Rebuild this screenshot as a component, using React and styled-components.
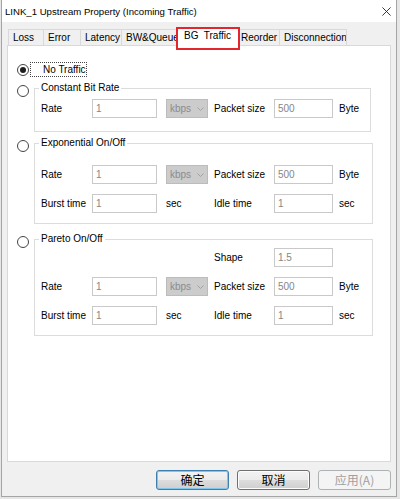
import React from 'react';
import styled, { createGlobalStyle } from 'styled-components';

const TABS = [
    { label: 'Loss', w: 36 },
    { label: 'Error', w: 37 },
    { label: 'Latency', w: 41 },
    { label: 'BW&Queue', w: 56 },
    { label: 'BG  Traffic', w: 59, active: true },
    { label: 'Reorder', w: 43 },
    { label: 'Disconnection', w: 67 },
];

const RATE_ROW = ['Rate', '1', 'kbps', 'Packet size', '500', 'Byte'];
const BURST_ROW = ['Burst time', '1', 'sec', 'Idle time', '1', 'sec'];

const GROUPS = [
    { title: 'Constant Bit Rate', w: 337, pt: 4, pb: 13, mt: 4, rows: [RATE_ROW] },
    { title: 'Exponential On/Off', w: 339, pt: 15, pb: 10, mt: 4, rows: [RATE_ROW, BURST_ROW] },
    {
        title: 'Pareto On/Off', w: 339, pt: 2, pb: 10, mt: 8,
        rows: [[null, null, null, 'Shape', '1.5', null], RATE_ROW, BURST_ROW],
    },
];

const App = () => {
    return (
        <>
            <GlobalStyle />
            <Window>
                <TitleBar>
                    <span>LINK_1 Upstream Property (Incoming Traffic)</span>
                    <CloseIcon viewBox="0 0 10 10">
                        <path d="M0.5 0.5 L9.5 9.5 M9.5 0.5 L0.5 9.5" />
                    </CloseIcon>
                </TitleBar>

                <Body>
                    <TabStrip>
                        {TABS.map((tab) => (
                            <Tab key={tab.label} $w={tab.w} $active={tab.active}>
                                {tab.label}
                                {tab.active && <Highlight />}
                            </Tab>
                        ))}
                    </TabStrip>

                    <Panel>
                        <OptionRow $center>
                            <Radio $checked />
                            <FocusLabel>No Traffic</FocusLabel>
                        </OptionRow>

                        {GROUPS.map((group) => (
                            <OptionRow key={group.title} $mt={group.mt}>
                                <Radio $top={4} />
                                <GroupBox $w={group.w} $pt={group.pt} $pb={group.pb}>
                                    <Legend>{group.title}</Legend>
                                    <FieldGrid>
                                        {group.rows.map((row, r) =>
                                            row.map((cell, c) => (
                                                <Cell key={`${r}-${c}`} cell={cell} col={c} />
                                            ))
                                        )}
                                    </FieldGrid>
                                </GroupBox>
                            </OptionRow>
                        ))}
                    </Panel>

                    <ButtonBar>
                        <DialogButton $focused>确定</DialogButton>
                        <DialogButton>取消</DialogButton>
                        <DialogButton disabled>应用(A)</DialogButton>
                    </ButtonBar>
                </Body>
            </Window>
        </>
    );
};

const Cell = ({ cell, col }) => {
    if (cell === null) return <span />;
    if (col === 1 || col === 4) return <TextBox>{cell}</TextBox>;
    if (col === 2 && cell === 'kbps') {
        return (
            <UnitSlot>
                <Select>
                    kbps
                    <Chevron viewBox="0 0 7 4">
                        <path d="M0.5 0.5 L3.5 3.5 L6.5 0.5" />
                    </Chevron>
                </Select>
            </UnitSlot>
        );
    }
    if (col === 2) return <UnitSlot>{cell}</UnitSlot>;
    if (col === 5) return <Unit>{cell}</Unit>;
    return <Label>{cell}</Label>;
};

export default App;

const GlobalStyle = createGlobalStyle`
    html, body {
        margin: 0;
        padding: 0;
    }
    body {
        width: 400px;
        height: 499px;
        overflow: hidden;
        background: #e6e6e6;
        font-family: "Liberation Sans", "Noto Sans CJK SC", Arial, sans-serif;
        font-size: 10px;
        color: #000;
    }
`;

const Window = styled.div`
    box-sizing: border-box;
    width: 396px;
    height: 497px;
    margin-left: 1px;
    background: #f0f0f0;
    border: 1px solid #a5a5a5;
    border-top: none;
    display: flex;
    flex-direction: column;
`;

const TitleBar = styled.div`
    height: 22px;
    background: #fff;
    display: flex;
    align-items: center;
    justify-content: space-between;
    padding: 0 5px 0 3px;
    font-size: 9.6px;
    color: #000;
`;

const CloseIcon = styled.svg`
    width: 9px;
    height: 9px;
    fill: none;
    stroke: #222;
    stroke-width: 1;
`;

const Body = styled.div`
    padding-left: 5px;
    display: flex;
    flex-direction: column;
`;

const TabStrip = styled.div`
    display: flex;
    align-items: flex-end;
    margin-top: 5px;
    padding-left: 1px;
    height: 18px;
`;

const Tab = styled.div`
    position: relative;
    box-sizing: border-box;
    flex: none;
    width: ${(p) => (p.$active ? p.$w + 4 : p.$w)}px;
    height: ${(p) => (p.$active ? 19 : 16)}px;
    line-height: 15px;
    padding: ${(p) => (p.$active ? '0' : '0 0 0 4px')};
    text-align: ${(p) => (p.$active ? 'center' : 'left')};
    white-space: pre;
    overflow: ${(p) => (p.$active ? 'visible' : 'hidden')};
    background: ${(p) => (p.$active ? '#fff' : '#f0f0f0')};
    border: 1px solid #d9d9d9;
    border-bottom: none;
    border-left-width: ${(p) => (p.$active ? 1 : 0)}px;
    margin: ${(p) => (p.$active ? '0 -2px -1px -2px' : '0')};
    z-index: ${(p) => (p.$active ? 1 : 0)};

    &:first-child {
        border-left-width: 1px;
    }
`;

const Highlight = styled.div`
    position: absolute;
    top: -1px;
    left: -1px;
    right: -2px;
    bottom: -4px;
    border: 2px solid #e3262b;
    pointer-events: none;
`;

const Panel = styled.div`
    box-sizing: border-box;
    width: 384px;
    height: 417px;
    background: #fff;
    border: 1px solid #d9d9d9;
    padding: 16px 0 0 9px;
    display: flex;
    flex-direction: column;
`;

const OptionRow = styled.div`
    display: flex;
    align-items: ${(p) => (p.$center ? 'center' : 'flex-start')};
    gap: ${(p) => (p.$center ? 1 : 5)}px;
    margin-top: ${(p) => p.$mt || 0}px;
`;

const Radio = styled.span`
    position: relative;
    flex: none;
    box-sizing: border-box;
    width: 12px;
    height: 12px;
    margin-top: ${(p) => p.$top || 0}px;
    border: 1px solid #444;
    border-radius: 50%;
    background: #fff;

    &::after {
        content: '';
        display: ${(p) => (p.$checked ? 'block' : 'none')};
        position: absolute;
        left: 2px;
        top: 2px;
        width: 6px;
        height: 6px;
        border-radius: 50%;
        background: #1e1e1e;
    }
`;

const FocusLabel = styled.span`
    line-height: 13px;
    padding: 0 0 0 12px;
    border: 1px dotted #444;
`;

const GroupBox = styled.fieldset`
    box-sizing: border-box;
    width: ${(p) => p.$w}px;
    min-width: 0;
    margin: 0;
    border: 1px solid #dcdcdc;
    padding: ${(p) => p.$pt}px 6px ${(p) => p.$pb}px 6px;
`;

const Legend = styled.legend`
    margin-left: -2px;
    padding: 0 2px;
    line-height: 14px;
    font-size: 10px;
`;

const FieldGrid = styled.div`
    display: grid;
    grid-template-columns: 51px 65px 57px 60px 59px auto;
    row-gap: 10px;
    align-items: center;
`;

const Label = styled.span`
    white-space: nowrap;
`;

const TextBox = styled.div`
    box-sizing: border-box;
    height: 19px;
    line-height: 17px;
    padding-left: 3px;
    border: 1px solid #c9c9c9;
    background: #fff;
    color: #868686;
`;

const UnitSlot = styled.div`
    padding-left: 9px;
`;

const Unit = styled.span`
    padding-left: 6px;
`;

const Select = styled.div`
    box-sizing: border-box;
    width: 42px;
    height: 19px;
    line-height: 17px;
    padding: 0 3px;
    border: 1px solid #bcbcbc;
    background: #cccccc;
    color: #8b8b8b;
    display: flex;
    align-items: center;
    justify-content: space-between;
`;

const Chevron = styled.svg`
    width: 7px;
    height: 4px;
    fill: none;
    stroke: #a2a2a2;
    stroke-width: 1;
`;

const ButtonBar = styled.div`
    display: flex;
    justify-content: flex-end;
    gap: 8px;
    width: 384px;
    margin-top: 8px;
`;

const DialogButton = styled.button`
    box-sizing: border-box;
    width: 73px;
    height: 20px;
    padding: 0;
    border-radius: 3px;
    font-family: "Noto Sans CJK SC", sans-serif;
    font-size: 12px;
    line-height: 16px;
    color: #000;
    border: 1px solid ${(p) => (p.$focused ? '#3c7fb1' : '#707070')};
    background: linear-gradient(#f2f2f2 0%, #ebebeb 50%, #dddddd 50%, #cfcfcf 100%);
    box-shadow: ${(p) => (p.$focused ? 'inset 0 0 0 1px #7fc6ee' : 'inset 0 0 0 1px #fcfcfc')};

    &:disabled {
        color: #a0a0a0;
        border-color: #adb2b5;
        background: #f4f4f4;
        box-shadow: none;
    }
`;
